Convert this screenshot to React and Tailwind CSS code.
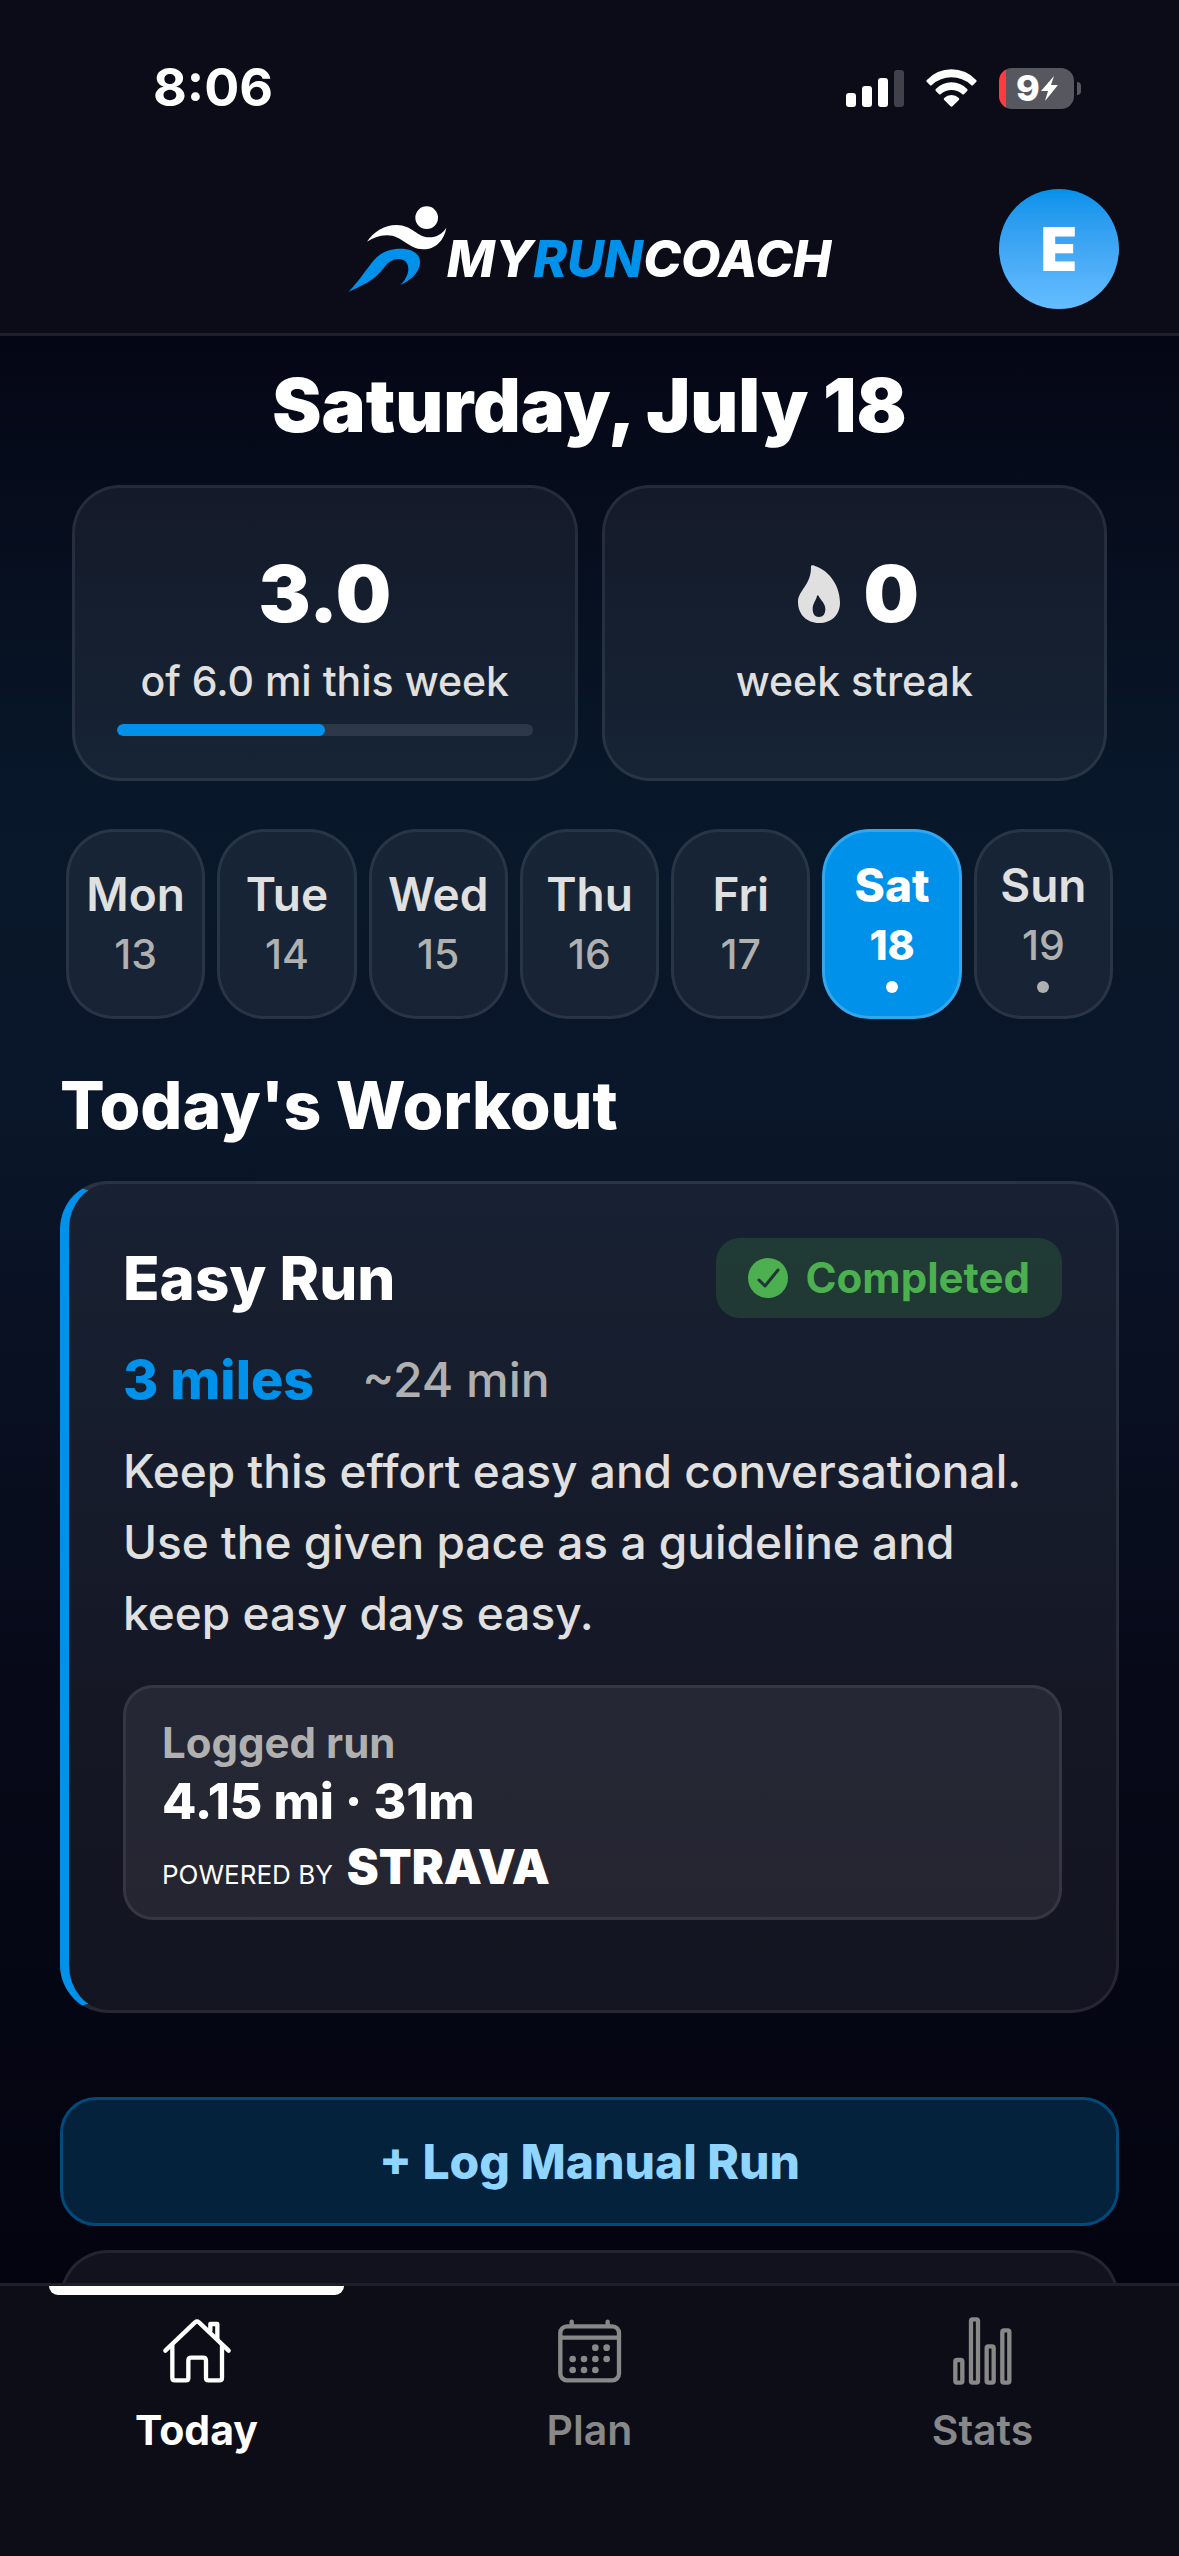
import React, { useState } from 'react';

const DAYS = [
  { day: 'Mon', date: 13 },
  { day: 'Tue', date: 14 },
  { day: 'Wed', date: 15 },
  { day: 'Thu', date: 16 },
  { day: 'Fri', date: 17 },
  { day: 'Sat', date: 18, planned: true },
  { day: 'Sun', date: 19, planned: true },
];

const HomeIcon = () => (
  <svg viewBox="120 105 216 216" className="size-[72px]" fill="none" stroke="currentColor" strokeWidth="13" strokeLinecap="round" strokeLinejoin="round" aria-hidden="true">
    <path d="M133 212 L222 127 Q228 122 234 127 L323 212" />
    <path d="M154 196 V293 Q154 301 162 301 H195 Q202 301 202 294 V242 Q202 233 211 233 H246 Q255 233 255 242 V294 Q255 301 262 301 H295 Q303 301 303 293 V196" />
    <path d="M268 152 V132 H289 V176" />
  </svg>
);

const CalendarIcon = () => (
  <svg viewBox="160 105 216 216" className="size-[72px]" fill="none" stroke="currentColor" strokeWidth="13" strokeLinecap="round" aria-hidden="true">
    <rect x="179" y="139" width="176" height="162" rx="20" />
    <path d="M180 173 H354 M213 125 V136 M321 125 V136" />
    <g fill="currentColor" stroke="none">
      <circle cx="284" cy="203" r="10" />
      <circle cx="318" cy="203" r="10" />
      <circle cx="216" cy="237" r="10" />
      <circle cx="250" cy="237" r="10" />
      <circle cx="284" cy="237" r="10" />
      <circle cx="318" cy="237" r="10" />
      <circle cx="216" cy="270" r="10" />
      <circle cx="250" cy="270" r="10" />
      <circle cx="284" cy="270" r="10" />
    </g>
  </svg>
);

const StatsIcon = () => (
  <svg viewBox="200 105 216 216" className="size-[72px]" fill="none" stroke="currentColor" strokeWidth="13" aria-hidden="true">
    <rect x="225" y="240" width="21" height="68" rx="5" />
    <rect x="272" y="118" width="21" height="190" rx="5" />
    <rect x="319" y="199" width="21" height="109" rx="5" />
    <rect x="366" y="151" width="21" height="157" rx="5" />
  </svg>
);

const TABS = [
  { id: 'today', label: 'Today', Icon: HomeIcon },
  { id: 'plan', label: 'Plan', Icon: CalendarIcon },
  { id: 'stats', label: 'Stats', Icon: StatsIcon },
];

const StatusBar = () => (
  <div className="flex items-center justify-between pt-[58px] pr-[98px] pl-[153px]">
    <span className="text-[52px] leading-[60px] font-bold">8:06</span>
    <div className="flex items-center gap-[22px]">
      <svg viewBox="0 0 58 38" className="h-[38px] w-[58px]" fill="#fff" aria-hidden="true">
        <rect x="0" y="24" width="10" height="14" rx="3" />
        <rect x="16" y="17" width="10" height="21" rx="3" />
        <rect x="32" y="9" width="10" height="29" rx="3" />
        <rect x="48" y="1" width="10" height="37" rx="3" fillOpacity="0.22" />
      </svg>
      <svg viewBox="319 85 152 114" className="h-[38px] w-[51px]" fill="#fff" aria-hidden="true">
        <path d="M321 118 Q318 121 322 125 L330 133 Q333 136 336 133 Q362 110 395 110 Q428 110 454 133 Q457 136 460 133 L468 125 Q472 121 469 118 Q438 86 395 86 Q352 86 321 118 Z" />
        <path d="M348 145 Q345 148 348 151 L357 160 Q360 163 363 160 Q377 148 395 148 Q413 148 427 160 Q430 163 433 160 L442 151 Q445 148 442 145 Q422 125 395 125 Q368 125 348 145 Z" />
        <path d="M373 172 Q370 175 373 178 L392 197 Q395 199 398 197 L417 178 Q420 175 417 172 Q408 163 395 163 Q382 163 373 172 Z" />
      </svg>
      <div className="flex items-center gap-[3px]">
        <div className="flex h-[41px] w-[75px] items-center rounded-[13px] bg-linear-to-r from-[#ff3b3f] from-[7px] to-[#57575f] to-[7px] pl-[17px]">
          <span className="text-[36px] leading-[40px] font-extrabold">9</span>
          <svg viewBox="0 0 17 25" className="ml-px h-[25px] w-[17px]" fill="#fff" aria-hidden="true">
            <path d="M13 0 L0 15 H7 L4 25 L17 9 H10 Z" />
          </svg>
        </div>
        <div className="h-[13px] w-1 rounded-r-full bg-[#57575f]" />
      </div>
    </div>
  </div>
);

const Logo = () => (
  <div className="flex items-start" aria-label="MyRunCoach">
    <svg viewBox="54 48 297 261" className="h-[87px] w-[99px]" aria-hidden="true">
      <circle cx="290" cy="83" r="34" fill="#fff" />
      <path d="M111 155 C130 126 162 105 200 105 C246 105 262 142 297 142 C321 142 337 131 349 113 C343 149 318 178 280 178 C234 178 217 136 171 136 C146 136 128 146 111 155 Z" fill="#fff" />
      <path d="M55 306 C92 267 112 233 135 207 C156 185 181 176 211 176 C246 176 270 190 270 216 C270 246 243 271 211 285 C226 270 235 253 235 237 C235 218 223 207 206 207 C189 207 176 216 165 229 C135 269 115 278 55 306 Z" fill="#0091ea" />
    </svg>
    <span className="pt-[21px] text-[51px] leading-[64px] font-extrabold italic">
      MY<span className="text-[#0091ea]">RUN</span>COACH
    </span>
  </div>
);

const FlameIcon = () => (
  <svg viewBox="57 75 126 174" className="h-[58px] w-[42px]" aria-hidden="true">
    <path fillRule="evenodd" fill="#e0e0e0" d="M96 79 C97 75 101 75 106 77 C151 91 183 137 183 188 C183 224 158 249 120 249 C83 249 57 223 57 186 C57 151 98 135 96 79 Z M114 168 C111 182 101 190 101 207 C101 222 108 231 120 231 C132 231 139 222 139 207 C139 190 126 182 119 168 Q116 164 114 168 Z" />
  </svg>
);

const WorkoutCard = () => (
  <article className="rounded-[48px] border-[3px] border-l-[9px] border-white/8 border-l-[#0091ea] bg-white/6 px-[54px] pt-[54px] pb-[90px]">
    <div className="flex items-center justify-between">
      <h3 className="text-[60px] leading-[80px] font-extrabold">Easy Run</h3>
      <div className="flex h-20 items-center gap-[18px] rounded-[24px] bg-[#4caf50]/18 px-8 text-[#4caf50]">
        <svg viewBox="0 0 40 40" className="size-10" aria-hidden="true">
          <circle cx="20" cy="20" r="20" fill="currentColor" />
          <path d="M11 22 L17 28 L30 12" fill="none" stroke="#203634" strokeWidth="3" strokeLinecap="round" strokeLinejoin="round" />
        </svg>
        <span className="text-[42px] leading-[56px] font-bold">Completed</span>
      </div>
    </div>
    <div className="mt-7 flex items-center gap-12 leading-[68px]">
      <span className="text-[54px] font-extrabold text-[#0091ea]">3 miles</span>
      <span className="text-[48px] font-medium text-[#b0b0b0]">~24 min</span>
    </div>
    <p className="mt-[22px] text-[46px] leading-[71px] font-medium text-[#e0e0e0]">
      Keep this effort easy and conversational. Use the given pace as a guideline and keep easy days easy.
    </p>
    <div className="mt-9 rounded-[30px] border-[3px] border-white/8 bg-white/7 px-9 pt-[27px] pb-[26px]">
      <div className="text-[42px] leading-[56px] font-bold text-[#b0b0b0]">Logged run</div>
      <div className="text-[50px] leading-[60px] font-extrabold">4.15 mi · 31m</div>
      <div className="mt-3 flex items-baseline gap-[14px]">
        <span className="text-[26px] leading-[24px]">POWERED BY</span>
        <span className="text-[48px] leading-[48px] font-black">STRAVA</span>
      </div>
    </div>
  </article>
);

const App = () => {
  const [selected, setSelected] = useState(18);
  const [tab, setTab] = useState('today');
  const done = 3;
  const goal = 6;

  return (
    <div className="flex h-screen flex-col overflow-hidden bg-[#05050f] font-['Inter',sans-serif] text-white">
      <header className="shrink-0 border-b-[3px] border-[#1f1f2b] bg-[#0b0c18] pb-6">
        <StatusBar />
        <div className="mt-[71px] grid grid-cols-[1fr_auto_1fr] items-center px-[60px]">
          <div />
          <Logo />
          <button
            aria-label="Account"
            className="size-[120px] justify-self-end rounded-full bg-linear-to-b from-[#0091ea] to-[#64bdff] text-[60px] font-black"
          >
            E
          </button>
        </div>
      </header>

      <main className="flex-1 overflow-hidden bg-[linear-gradient(to_bottom,#050615_0%,#08182a_24%,#0a1629_40%,#070918_70%,#040410_100%)] px-[60px] pt-6">
        <h1 className="text-center text-[74px] leading-[90px] font-black">Saturday, July 18</h1>

        <section className="mt-[35px] grid grid-cols-2 gap-6 px-3 text-center">
          <div className="rounded-[48px] border-[3px] border-white/8 bg-white/6 px-[42px] pt-14 pb-[42px]">
            <div className="text-[78px] leading-[100px] font-black">3.0</div>
            <div className="mt-2 text-[41px] leading-[58px] font-medium text-[#e0e0e0]">of 6.0 mi this week</div>
            <div className="mt-[14px] h-3 overflow-hidden rounded-full bg-white/10">
              <div className="h-3 rounded-full bg-[#0091ea]" style={{ width: `${(done / goal) * 100}%` }} />
            </div>
          </div>
          <div className="rounded-[48px] border-[3px] border-white/8 bg-white/6 px-[42px] pt-14 pb-[42px]">
            <div className="flex items-center justify-center gap-6 pl-2 text-[78px] leading-[100px] font-black">
              <FlameIcon />
              <span>0</span>
            </div>
            <div className="mt-2 text-[41px] leading-[58px] font-medium text-[#e0e0e0]">week streak</div>
          </div>
        </section>

        <section className="mt-12 grid grid-cols-7 gap-3 px-[6px]">
          {DAYS.map(({ day, date, planned }) => {
            const active = date === selected;
            return (
              <button
                key={date}
                onClick={() => setSelected(date)}
                className={`flex h-[190px] flex-col items-center justify-center rounded-[48px] border-[3px] leading-[60px] ${
                  active ? 'border-[#33a7ee] bg-[#0091ea] font-extrabold' : 'border-white/8 bg-white/6'
                }`}
              >
                <span className={`text-[46px] ${active ? 'text-white' : 'font-semibold text-[#e0e0e0]'}`}>{day}</span>
                <span className={`text-[41px] ${active ? 'text-white' : 'font-medium text-[#b0b0b0]'}`}>{date}</span>
                {planned && <span className={`mt-[6px] size-3 rounded-full ${active ? 'bg-white' : 'bg-[#b0b0b0]'}`} />}
              </button>
            );
          })}
        </section>

        <h2 className="mt-[46px] mb-9 text-[66px] leading-[80px] font-extrabold">Today's Workout</h2>
        <WorkoutCard />

        <button className="mt-[84px] h-[129px] w-full rounded-[36px] border-[3px] border-[#004a7c] bg-[#05223c] text-[48px] font-extrabold text-[#90d5ff]">
          + Log Manual Run
        </button>
        <div className="mt-6 h-40 rounded-[48px] border-[3px] border-white/8 bg-white/6" />
      </main>

      <nav className="grid h-[273px] shrink-0 grid-cols-3 border-t-[3px] border-[#1f1f2b] bg-[#0d0d18]">
        {TABS.map(({ id, label, Icon }) => (
          <button
            key={id}
            onClick={() => setTab(id)}
            className={`flex flex-col items-center ${tab === id ? 'text-white' : 'text-[#888888]'}`}
          >
            <span className={`h-[9px] w-3/4 rounded-b-[9px] ${tab === id ? 'bg-white' : ''}`} />
            <span className="mt-5">
              <Icon />
            </span>
            <span className={`mt-[17px] text-[41px] leading-[52px] ${tab === id ? 'font-bold' : 'font-semibold'}`}>{label}</span>
          </button>
        ))}
      </nav>
    </div>
  );
};

export default App;
